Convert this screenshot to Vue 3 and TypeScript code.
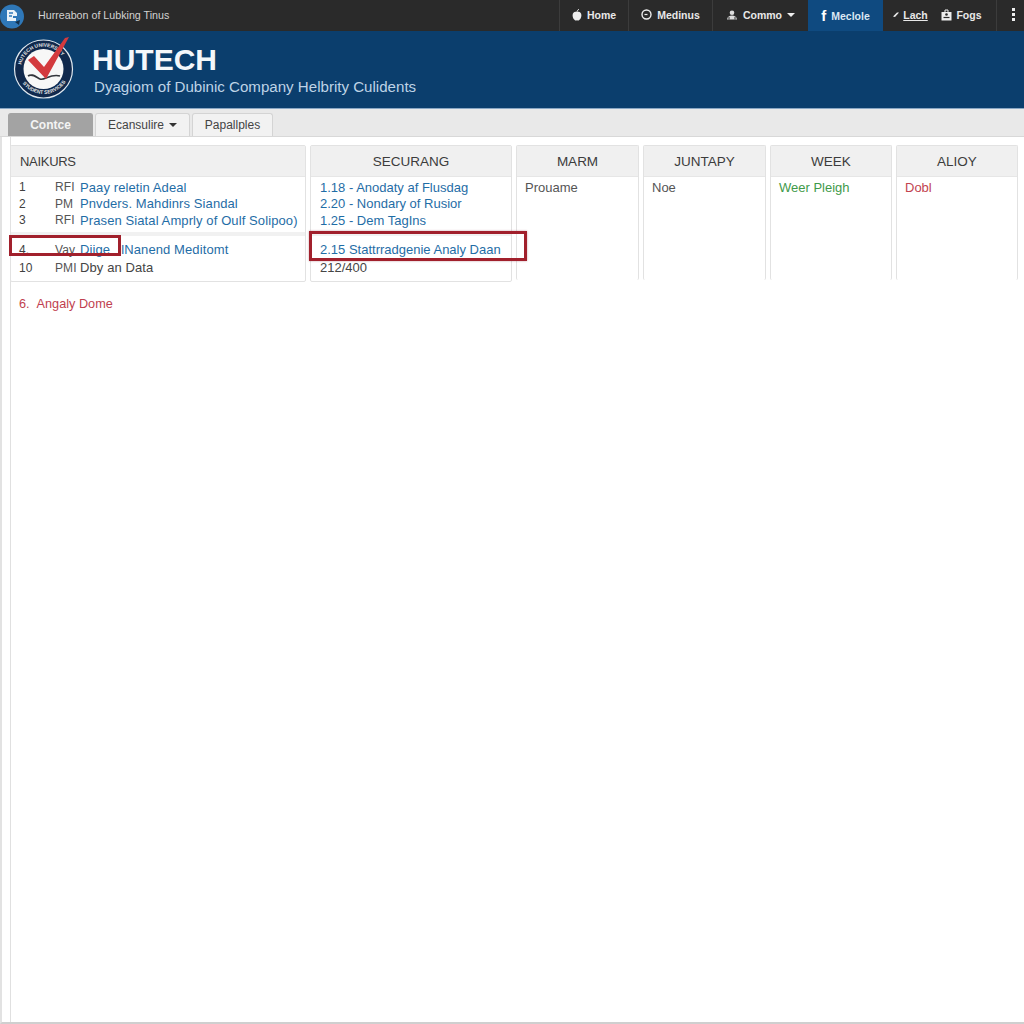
<script setup lang="ts">
const links = [
  { label: "Home", icon: "apple", width: 69 },
  { label: "Medinus", icon: "clock", width: 84 },
  { label: "Commo", icon: "people", width: 96, caret: true },
  { label: "Meclole", icon: "f", width: 75, active: true },
  { label: "Lach", icon: "tick", width: 55, underline: true, bare: true },
  { label: "Fogs", icon: "badge", width: 58, bare: true, last: true },
];

const hours = [
  { num: "1", kind: "RFI", name: "Paay reletin Adeal" },
  { num: "2", kind: "PM", name: "Pnvders. Mahdinrs Siandal" },
  { num: "3", kind: "RFI", name: "Prasen Siatal Amprly of Oulf Solipoo)" },
];

const sessions = ["1.18 - Anodaty af Flusdag", "2.20 - Nondary of Rusior", "1.25 - Dem TagIns"];

const sideColumns = [
  { title: "MARM", text: "Prouame", tone: "grey" },
  { title: "JUNTAPY", text: "Noe", tone: "grey" },
  { title: "WEEK", text: "Weer Pleigh", tone: "green" },
  { title: "ALIOY", text: "Dobl", tone: "red" },
];
</script>

<template>
  <div class="page">
    <div class="topbar">
      <div class="brand">
        <svg class="brand-icon" width="25" height="25" viewBox="0 0 25 25">
          <circle cx="12" cy="12.5" r="12" fill="#2f78b8" />
          <path d="M7 6h7l3 3v3h-4v2h3v3H7z" fill="#eaf2f8" />
          <path d="M9 9h4M9 12h3" stroke="#2f78b8" stroke-width="1.4" />
          <path d="M15 18l5-2-1 5z" fill="#12304c" />
        </svg>
        <span>Hurreabon of Lubking Tinus</span>
      </div>
      <nav class="links">
        <a
          v-for="link in links"
          :key="link.label"
          class="link"
          :class="{ active: link.active, bare: link.bare, last: link.last }"
          :style="{ width: link.width + 'px' }"
        >
          <svg v-if="link.icon === 'apple'" width="10" height="12" viewBox="0 0 10 12">
            <path d="M5 3C3 2 .6 3 .6 6.200C.6 9 2.500 11.500 3.800 11.500c.6 0 .8-.3 1.200-.3s.7.3 1.200.3C7.500 11.500 9.400 9 9.400 6.200 9.400 3 7 2 5 3z" fill="#eee" />
            <path d="M5 3c0-1.200.7-2.200 2-2.600" stroke="#eee" fill="none" />
          </svg>
          <svg v-else-if="link.icon === 'clock'" width="11" height="11" viewBox="0 0 11 11">
            <circle cx="5.500" cy="5.500" r="4.500" fill="none" stroke="#eee" stroke-width="1.400" />
            <path d="M3.500 5.500h3" stroke="#eee" stroke-width="1.200" />
          </svg>
          <svg v-else-if="link.icon === 'people'" width="12" height="10" viewBox="0 0 12 10">
            <circle cx="6" cy="2.800" r="2.300" fill="#ddd" />
            <path d="M1 9.500c.5-3 2.500-4 5-4s4.500 1 5 4z" fill="#ddd" />
            <path d="M3 7v2.500M9 7v2.500" stroke="#2a2a2a" />
          </svg>
          <span v-else-if="link.icon === 'f'" class="f-mark">f</span>
          <svg v-else-if="link.icon === 'tick'" width="6" height="6" viewBox="0 0 6 6">
            <path d="M0 4.500L4 .5h2L2 5z" fill="#eee" />
          </svg>
          <svg v-else-if="link.icon === 'badge'" width="11" height="12" viewBox="0 0 11 12">
            <path d="M.5 3h10v8.500H.5z" fill="#eee" />
            <path d="M4 3V1h3v2" stroke="#eee" fill="none" />
            <path d="M2.500 8.500h6" stroke="#2a2a2a" stroke-width="1.200" />
            <circle cx="5.500" cy="5.500" r="1.300" fill="#2a2a2a" />
          </svg>
          <span :class="{ under: link.underline }">{{ link.label }}</span>
          <i v-if="link.caret" class="caret"></i>
        </a>
        <span class="dots"><i></i><i></i><i></i></span>
      </nav>
    </div>

    <header class="banner">
      <svg class="logo" width="62" height="66" viewBox="0 0 62 66">
        <defs>
          <path id="ring-top" d="M8 33a22.500 22.500 0 0 1 45 0" />
          <path id="ring-bottom" d="M5 37a26 26 0 0 0 51 0" />
        </defs>
        <circle cx="30.500" cy="33" r="29" fill="#10294d" stroke="#dfe7ee" stroke-width="1.200" />
        <circle cx="30.500" cy="33" r="20" fill="#f7f7f7" />
        <text class="ring-text"><textPath href="#ring-top" startOffset="6%">HUTECH UNIVERSITY</textPath></text>
        <text class="ring-text"><textPath href="#ring-bottom" startOffset="16%">STUDENT SERVICES</textPath></text>
        <path d="M15 40c4-3 8 1 12 3s11-6 20-3" fill="none" stroke="#33363c" stroke-width="1.600" />
        <path d="M15 24l6-4 10 11L52 2l4-1-23 42z" fill="#d33a3e" />
      </svg>
      <div class="titles">
        <h1>HUTECH</h1>
        <p>Dyagiom of Dubinic Company Helbrity Culidents</p>
      </div>
    </header>

    <div class="tabs">
      <a class="tab current">Contce</a>
      <a class="tab tab-menu">Ecansulire <i class="caret dark"></i></a>
      <a class="tab tab-last">Papallples</a>
    </div>

    <div class="content">
      <main class="panel">
        <div class="schedule">
          <section class="col first">
            <h2 class="head left">NAIKURS</h2>
            <div class="rows">
              <div v-for="row in hours" :key="row.num" class="row">
                <span class="num">{{ row.num }}</span>
                <span class="kind">{{ row.kind }}</span>
                <span class="blue">{{ row.name }}</span>
              </div>
            </div>
            <div class="rows lower">
              <div class="row marked">
                <span class="num">4.</span>
                <span class="kind">Vay</span>
                <span class="blue">Diige &nbsp;&nbsp;lNanend Meditomt</span>
                <b class="mark mark-hour"></b>
              </div>
              <div class="row">
                <span class="num">10</span>
                <span class="kind">PMI</span>
                <span class="plain">Dby an Data</span>
              </div>
            </div>
          </section>

          <section class="col second">
            <h2 class="head">SECURANG</h2>
            <div class="rows">
              <div v-for="item in sessions" :key="item" class="row"><span class="blue">{{ item }}</span></div>
            </div>
            <div class="rows lower">
              <div class="row marked">
                <span class="blue">2.15 Stattrradgenie Analy Daan</span>
                <b class="mark mark-session"></b>
              </div>
              <div class="row"><span class="plain">212/400</span></div>
            </div>
          </section>

          <section v-for="col in sideColumns" :key="col.title" class="col side">
            <h2 class="head">{{ col.title }}</h2>
            <div class="side-body" :class="col.tone">{{ col.text }}</div>
          </section>
        </div>
        <p class="warning"><span>6.</span>Angaly Dome</p>
      </main>
    </div>
  </div>
</template>

<style>
html,
body {
  background: #fff;
}
</style>

<style scoped>
.page {
  width: 1024px;
  height: 1024px;
  overflow: hidden;
  display: flex;
  flex-direction: column;
  font-family: "Liberation Sans", Arial, sans-serif;
  background: #fff;
}

.topbar {
  height: 31px;
  flex: none;
  display: flex;
  justify-content: space-between;
  box-sizing: border-box;
  background: #2a2a2a;
  color: #d2d2d2;
  font-size: 10.700px;
}

.brand {
  display: flex;
  align-items: center;
  gap: 13px;
  padding-bottom: 2px;
}

.brand-icon {
  margin-top: 3px;
}

.links {
  display: flex;
}

.link {
  display: flex;
  align-items: center;
  justify-content: center;
  gap: 5px;
  padding-bottom: 2px;
  border-left: 1px solid #3c3c3c;
  box-sizing: border-box;
  font-weight: 700;
  font-size: 10.500px;
  color: #e8e8e8;
}

.link.active {
  background: #0f4a80;
  border-left: none;
  padding-bottom: 0;
  color: #dbe8f3;
}

.link.bare {
  border-left: none;
  gap: 4px;
}

.link.last {
  padding-right: 11px;
}

.f-mark {
  font-size: 15px;
  color: #fff;
}

.under {
  text-decoration: underline;
}

.caret {
  display: inline-block;
  border: 4px solid transparent;
  border-top: 4px solid #eee;
  border-bottom: none;
}

.caret.dark {
  border-top-color: #333;
  margin-left: 5px;
  vertical-align: 2px;
}

.dots {
  width: 28px;
  box-sizing: border-box;
  display: flex;
  flex-direction: column;
  align-items: center;
  justify-content: center;
  gap: 2px;
  padding: 0 0 2px 6px;
  border-left: 1px solid #3c3c3c;
}

.dots i {
  width: 3px;
  height: 3px;
  background: #eee;
}

.banner {
  height: 78px;
  flex: none;
  display: flex;
  align-items: flex-start;
  gap: 17px;
  padding-left: 13px;
  box-sizing: border-box;
  background: #0b3e6d;
  border-bottom: 1px solid #8aa7c4;
}

.logo {
  margin-top: 5px;
}

.ring-text {
  font-size: 5px;
  font-weight: 700;
  fill: #e6e6e6;
}

.titles {
  padding-top: 12px;
}

h1 {
  margin: 0;
  font-size: 30px;
  line-height: 34px;
  font-weight: 700;
  color: #f4f7fa;
}

.titles p {
  margin: 1px 0 0 2px;
  font-size: 15.100px;
  line-height: 17px;
  color: #bed3e6;
}

.tabs {
  height: 28px;
  flex: none;
  display: flex;
  align-items: flex-end;
  gap: 2px;
  padding-left: 8px;
  box-sizing: border-box;
  background: #e9e9e9;
  border-bottom: 1px solid #d8d8d8;
}

.tab {
  height: 23px;
  display: flex;
  align-items: center;
  justify-content: center;
  box-sizing: border-box;
  border: 1px solid #d4d4d4;
  border-bottom: none;
  border-radius: 3px 3px 0 0;
  background: #f2f2f2;
  color: #444;
  font-size: 12px;
}

.tab.current {
  width: 85px;
  background: #a3a3a3;
  border-color: #a3a3a3;
  color: #f4f4f4;
  font-weight: 700;
}

.tab-menu {
  width: 95px;
}

.tab-last {
  width: 81px;
}

.content {
  flex: 1;
  display: flex;
  padding-left: 8px;
  border-left: 2px solid #e2e2e2;
  border-bottom: 2px solid #cfcfcf;
}

.panel {
  flex: 1;
  padding-top: 8px;
  border-left: 1px solid #e0e0e0;
}

.schedule {
  display: grid;
  grid-template-columns: 296px 202px 123px 123px 122px 122px;
  column-gap: 4px;
  align-items: start;
  width: 1008px;
  margin-left: -1px;
}

.col {
  box-sizing: border-box;
  border: 1px solid #e2e2e2;
  border-radius: 2px;
  background: #fff;
}

.side {
  height: 135px;
  border-bottom: none;
}

.first,
.second {
  height: 137px;
}

.head {
  margin: 0;
  height: 30px;
  display: flex;
  align-items: center;
  justify-content: center;
  background: #f0f0f0;
  border-bottom: 1px solid #e6e6e6;
  color: #3c3c3c;
  font-size: 13.500px;
  font-weight: 400;
}

.head.left {
  justify-content: flex-start;
  padding-left: 9px;
  font-size: 13px;
  letter-spacing: -0.3px;
}

.rows {
  padding: 2px 0 0;
}

.lower {
  margin-top: 3px;
  padding-top: 5px;
  border-top: 4px solid #f1f1f1;
}

.row {
  position: relative;
  height: 16.500px;
  display: flex;
  align-items: center;
  font-size: 13px;
  white-space: nowrap;
  padding-left: 9px;
}

.first .row {
  padding-left: 8px;
  letter-spacing: 0.1px;
}

.lower .row {
  height: 18px;
}

.num {
  width: 36px;
  flex: none;
  color: #3f3f3f;
  font-size: 12px;
}

.kind {
  width: 25px;
  flex: none;
  color: #555;
  font-size: 12px;
}

.blue {
  color: #1f6da6;
}

.plain {
  color: #454545;
}

.mark {
  position: absolute;
  display: block;
  box-sizing: border-box;
  border: 3px solid #a1202c;
  pointer-events: none;
}

.mark-hour {
  left: -2px;
  top: -6px;
  width: 112px;
  height: 21px;
}

.mark-session {
  left: -2px;
  top: -10px;
  width: 218px;
  height: 30px;
  box-shadow: 0 0 2px rgba(120, 30, 40, 0.4);
}

.side-body {
  padding: 3px 0 0 8px;
  font-size: 13px;
  line-height: 16px;
}

.grey {
  color: #555;
}

.green {
  color: #3f9a4a;
}

.red {
  color: #c2434f;
}

.warning {
  display: flex;
  gap: 7px;
  margin: 14px 0 0 8px;
  font-size: 12.700px;
  line-height: 16px;
  color: #bf3f50;
}
</style>
